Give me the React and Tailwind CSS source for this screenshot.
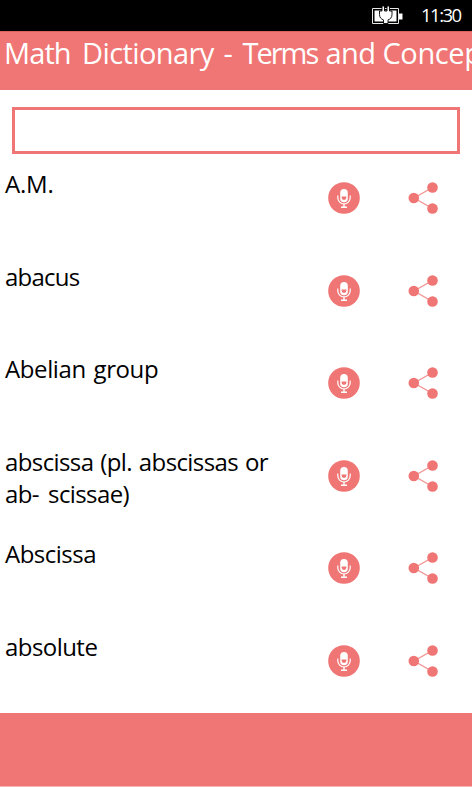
const terms = [
  { lines: ['A.M.'], tracking: 'tracking-[-0.2px]' },
  { lines: ['abacus'], tracking: 'tracking-[-0.75px]' },
  { lines: ['Abelian group'], tracking: 'tracking-[-0.4px] [word-spacing:2px]' },
  { lines: ['abscissa (pl. abscissas or', 'ab- scissae)'], tracking: 'tracking-[-0.6px] [word-spacing:1.2px]', last: '[word-spacing:3.5px]' },
  { lines: ['Abscissa'], tracking: 'tracking-[-0.5px]' },
  { lines: ['absolute'], tracking: 'tracking-[-0.55px]' },
];

function BatteryIcon() {
  return (
    <svg width="34" height="20" viewBox="0 0 34 20" className="block">
      <path d="M1.500 3.500h26v15h-26z" fill="none" stroke="#e8e8e8" />
      <path d="M3.500 5.500h22v11h-22z" fill="#fff" />
      <path d="M28 8.500h3.500v6H28z" fill="#fff" />
      <path
        d="M11 1h2.500v5h2.500V1h2.500v5h2.500v3.500c0 3-1.700 4.700-4 5.400V18.500h-4.500v-3.600c-2.300-.7-4-2.400-4-5.400V6H11z"
        fill="#fff"
        stroke="#000"
        strokeWidth=".9"
      />
    </svg>
  );
}

function MicButton() {
  return (
    <button className="block size-8">
      <svg width="32" height="32" viewBox="0 0 32 32">
        <circle cx="16" cy="16" r="15.800" fill="#ef7674" />
        <rect x="12.200" y="7" width="7.600" height="13.300" rx="3.800" fill="#fff" />
        <path d="M13.600 14.600h4.800v1a2.400 2.400 0 0 1-4.800 0z" fill="#ef7674" />
        <path d="M9.800 13.500v2.300a6.200 6.200 0 0 0 12.400 0v-2.300" fill="none" stroke="#fff" strokeWidth="1.200" />
        <path d="M15.300 21.800h1.400v2.700H19v1.400h-6v-1.400h2.300z" fill="#fff" />
      </svg>
    </button>
  );
}

function ShareButton() {
  return (
    <button className="block size-8">
      <svg width="32" height="32" viewBox="0 0 32 32">
        <path d="M24.500 5.500 6 16l18.500 10.500" fill="none" stroke="#f19391" strokeWidth="1.300" />
        <g fill="#ef7674">
          <circle cx="24.500" cy="5.500" r="5.300" />
          <circle cx="5.800" cy="16" r="5.300" />
          <circle cx="24.500" cy="26.500" r="5.300" />
        </g>
      </svg>
    </button>
  );
}

export default function App() {
  return (
    <div className="flex h-[787px] w-[472px] flex-col overflow-hidden bg-white font-['Open_Sans','Noto_Sans',sans-serif] text-black">
      <div className="flex h-[31px] shrink-0 justify-end bg-black text-white">
        <div className="pt-[5px]">
          <BatteryIcon />
        </div>
        <span className="ml-[16px] w-[51px] whitespace-nowrap pt-px text-[18.500px] leading-[28px] tracking-[-1.5px]">11:30</span>
      </div>
      <header className="h-[59px] shrink-0 overflow-hidden border-t border-[#d96664] bg-[#ef7674] pl-[4px] text-white">
        <h1 className="flex whitespace-pre text-[29px] leading-[42px] tracking-[-0.4px]">
          <span className="w-[78px] shrink-0 tracking-[-0.9px]">Math </span>
          <span className="w-[141.500px] shrink-0 tracking-[-0.6px]">Dictionary </span>
          <span className="w-[19px] shrink-0">- </span>
          <span className="w-[83px] shrink-0 tracking-[-2px]">Terms </span>
          <span className="w-[57px] shrink-0 tracking-[-0.6px]">and </span>
          <span className="shrink-0">Concepts</span>
        </h1>
      </header>
      <div className="shrink-0 px-[12px] pt-[17px]">
        <input className="block h-[47px] w-full border-[3px] border-[#ef7674] bg-white outline-none" />
      </div>
      <ul className="h-[559px] overflow-hidden pt-[14px]">
        {terms.map((term) => (
          <li key={term.lines[0]} className="flex h-[92.500px]">
            <p className={`w-[323px] whitespace-nowrap pl-[5px] text-[24px] leading-[32.500px] ${term.tracking}`}>
              {term.lines.map((line, i) => (
                <span key={line} className={`block ${i > 0 ? term.last : ''}`}>{line}</span>
              ))}
            </p>
            <div className="flex gap-[48px] pl-[5px] pt-[14.400px]">
              <MicButton />
              <ShareButton />
            </div>
          </li>
        ))}
      </ul>
      <footer className="h-[74px] shrink-0 border-b border-[#f9b5b4] bg-[#ef7674]" />
    </div>
  );
}
